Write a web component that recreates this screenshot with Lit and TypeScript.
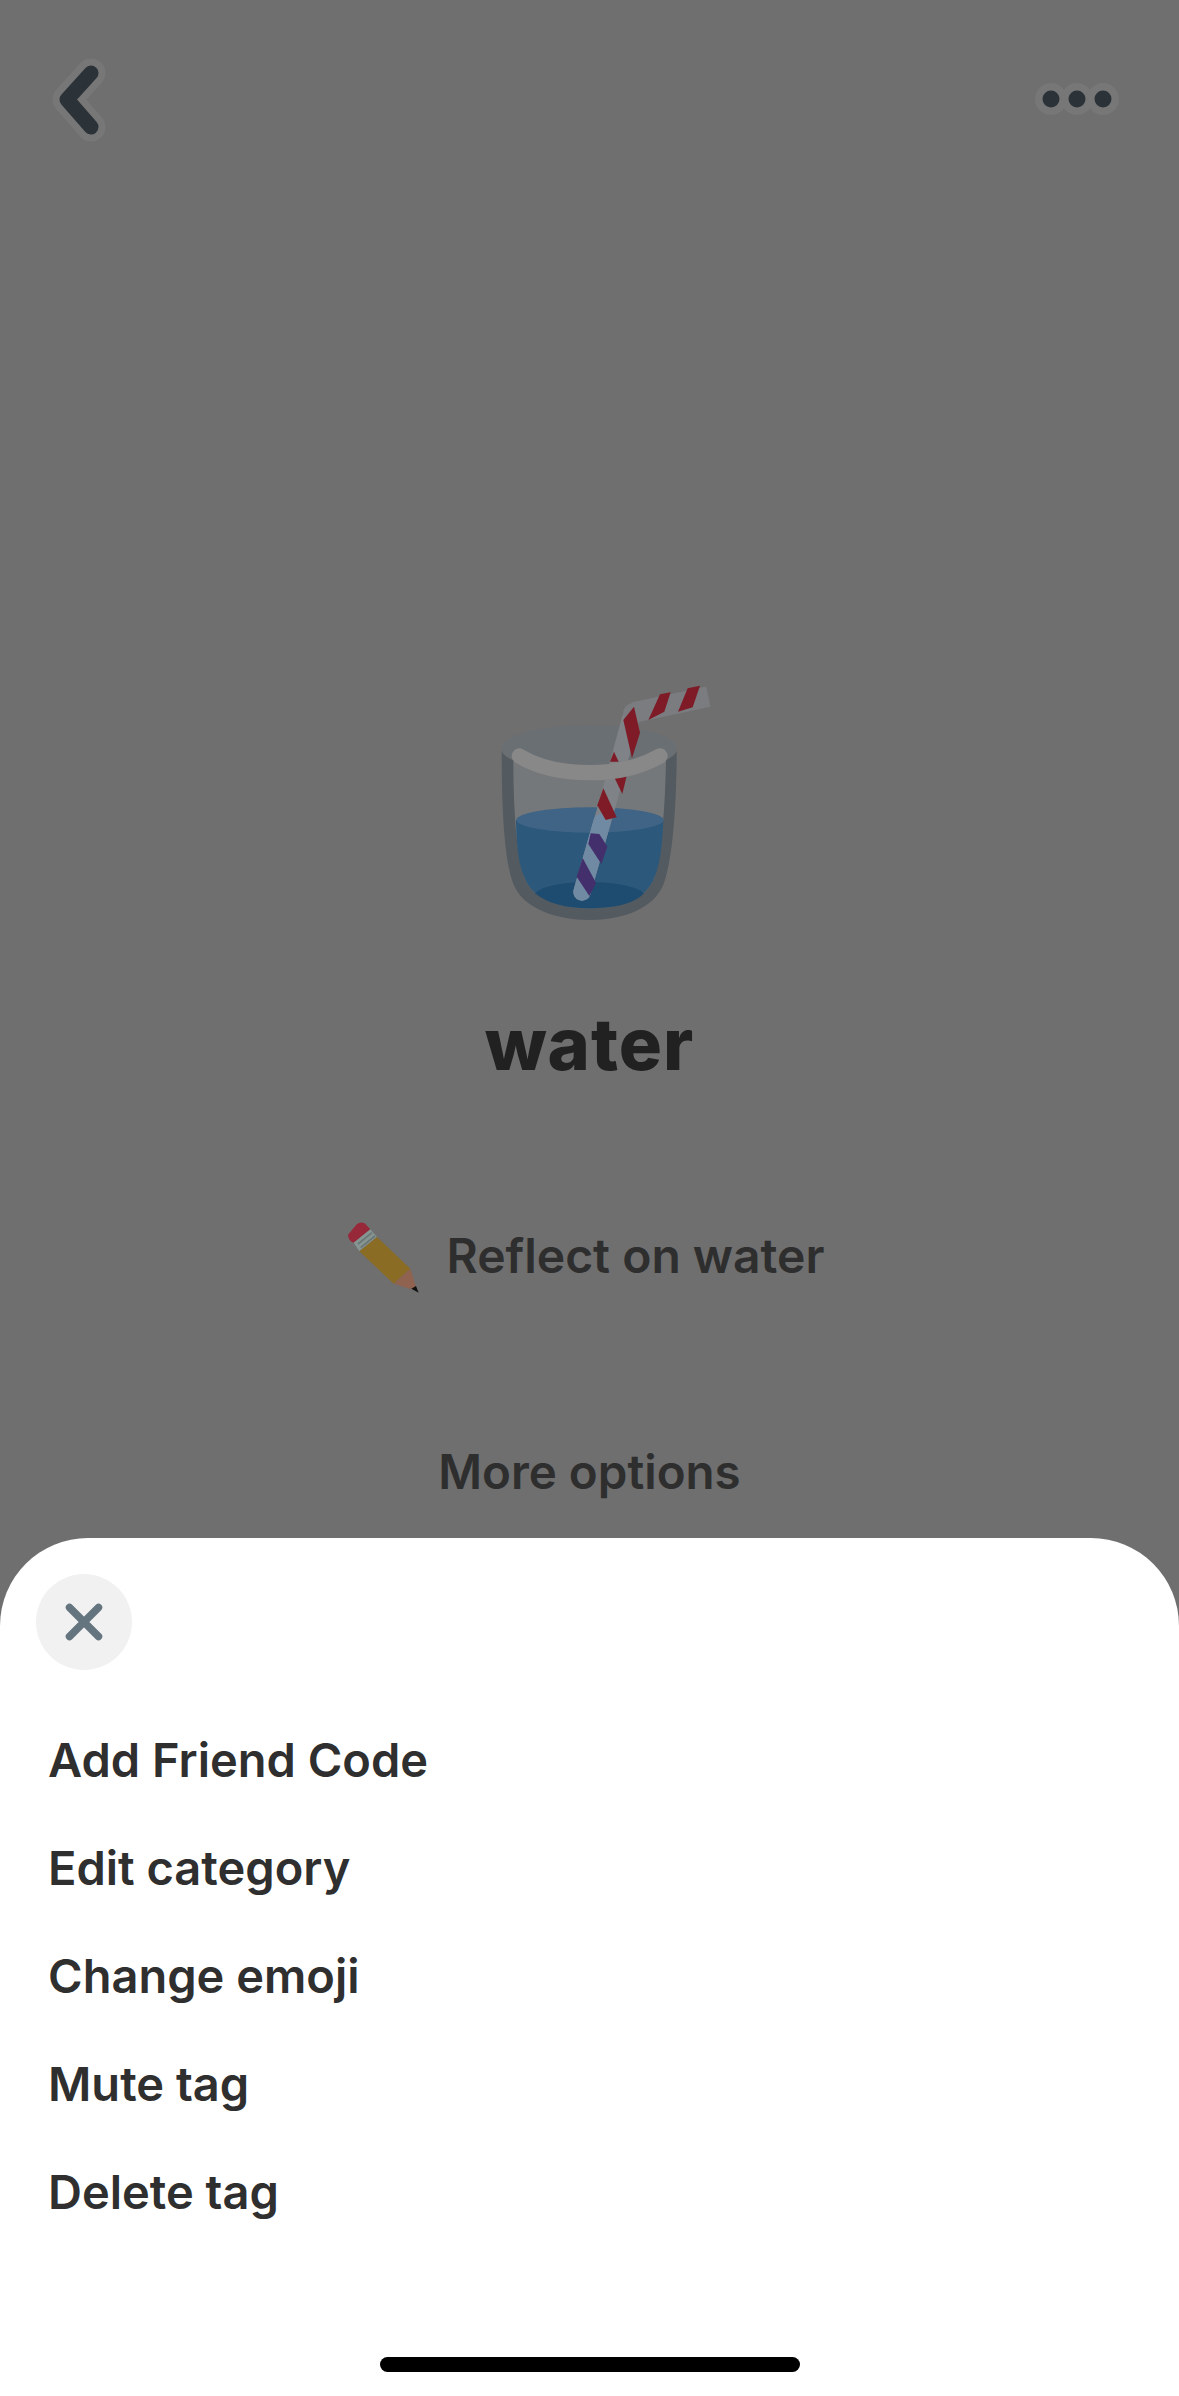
import { LitElement, html, css } from "lit";
import { customElement } from "lit/decorators.js";

const ITEMS = ["Add Friend Code", "Edit category", "Change emoji", "Mute tag", "Delete tag"];

@customElement("app-root")
export class AppRoot extends LitElement {
  static styles = css`
    :host { display: block; width: 1179px; height: 2396px; overflow: hidden; background: #6f6f6f;
      font-family: Inter, "Noto Sans", sans-serif; }
    .screen { display: flex; flex-direction: column; height: 2396px; }
    .dim { height: 1538px; flex: none; display: flex; flex-direction: column; align-items: center; }
    .top { width: 100%; box-sizing: border-box; padding: 54px 60px 0 46px; display: flex; justify-content: space-between; height: 686px; }
    .back { width: 66px; height: 92px; display: block; }
    .more { width: 88px; height: 46px; display: block; margin-top: 22px; }
    .glass { width: 280px; height: 280px; display: block; margin-left: 20px; flex: none; margin-top: -26px; }
    h1 { margin: 64px 0 0; font-size: 72px; line-height: 80px; font-weight: 800; color: #212121; letter-spacing: 1px; }
    .reflect { display: flex; align-items: center; gap: 27px; margin-top: 127px; margin-left: -7px; font-size: 48px; line-height: 90px; font-weight: 600; color: #2e2e2e; }
    .pencil { width: 72px; height: 72px; display: block; margin-top: 4px; }
    .options { margin-top: 143px; font-size: 47.5px; line-height: 56px; font-weight: 600; color: #2e2e2e; }
    .sheet { flex: 1; background: #fff; border-radius: 88px 88px 0 0; box-sizing: border-box; padding: 36px 36px 0; display: flex; flex-direction: column; }
    .close { width: 96px; height: 96px; border-radius: 50%; background: #f1f1f2; display: flex; align-items: center; justify-content: center; flex: none; }
    .close svg { width: 40px; height: 40px; display: block; }
    ul { list-style: none; margin: 36px 0 0; padding: 0 0 0 12px; }
    li { height: 108px; line-height: 108px; font-size: 47px; font-weight: 600; color: #2f2f2f; }
    .foot { margin-top: auto; padding-bottom: 24px; display: flex; justify-content: center; }
    .bar { width: 420px; height: 15px; border-radius: 8px; background: #000; }
  `;

  render() {
    return html`<div class="screen">
      <div class="dim">
        <div class="top">
          <svg class="back" viewBox="0 0 66 92">
            <path d="M45 19 L21 45.5 L45 73" fill="none" stroke="#777" stroke-width="29" stroke-linecap="round" stroke-linejoin="round"/>
            <path d="M45 19 L21 45.5 L45 73" fill="none" stroke="#2c3338" stroke-width="15" stroke-linecap="round" stroke-linejoin="round"/>
          </svg>
          <svg class="more" viewBox="0 0 88 46">
            <g fill="#777"><circle cx="20" cy="23" r="16"/><circle cx="46" cy="23" r="16"/><circle cx="72" cy="23" r="16"/></g>
            <g fill="#2c3338"><circle cx="20" cy="23" r="8.5"/><circle cx="46" cy="23" r="8.5"/><circle cx="72" cy="23" r="8.5"/></g>
          </svg>
        </div>
        <svg class="glass" viewBox="0 0 840 840">
          <ellipse cx="388" cy="265" rx="262" ry="70" fill="#6a6f73"/>
          <path d="M125 270 C125 420 130 590 159 669 C185 745 290 780 388 780 C490 780 585 745 612 669 C640 590 650 420 650 270 C650 300 540 340 388 340 C240 340 125 300 125 270Z" fill="#535a60"/>
          <path d="M160 300 C160 430 168 590 195 655 C215 715 300 745 388 745 C480 745 560 715 582 655 C605 590 616 430 618 300 C560 330 480 345 388 345 C290 345 210 330 160 300Z" fill="#75787a"/>
          <path d="M168 480 C170 570 178 620 195 655 C215 715 300 745 388 745 C480 745 560 715 582 655 C598 620 606 570 610 480Z" fill="#2b587b"/>
          <ellipse cx="390" cy="480" rx="221" ry="38" fill="#3f6485"/>
          <path d="M225 700 C270 655 500 655 552 700 C520 735 450 745 388 745 C320 745 260 730 225 700Z" fill="#1d4c70"/>
          <path d="M366 696 L440 440 L512 175" fill="none" stroke="#7f8286" stroke-width="52" stroke-linecap="round" stroke-linejoin="round"/>
          <path d="M520 158 L745 110" fill="none" stroke="#7a7c80" stroke-width="62"/>
          <circle cx="520" cy="160" r="31" fill="#7a7c80"/>
          <path d="M366 696 L426 486" fill="none" stroke="#708aa3" stroke-width="52" stroke-linecap="round"/>
          <g fill="#7e1b27">
            <path d="M522 140 L490 180 L516 295 L540 218Z"/>
            <path d="M565 180 L600 103 L632 97 L613 155Z"/>
            <path d="M654 155 L683 85 L720 77 L698 142Z"/>
            <path d="M462 275 L450 305 L476 305Z"/>
            <path d="M462 350 L500 348 L487 402Z"/>
            <path d="M430 385 L412 436 L437 480 L470 472Z"/>
          </g>
          <g fill="#432f6c">
            <path d="M392 520 L418 522 L442 560 L424 612 L385 552Z"/>
            <path d="M368 594 L350 650 L388 708 L408 668Z"/>
          </g>
          <path d="M178 288 C240 326 320 338 390 338 C470 338 540 322 600 288" fill="none" stroke="#888" stroke-width="46" stroke-linecap="round"/>
        </svg>
        <h1>water</h1>
        <div class="reflect">
          <svg class="pencil" viewBox="55 720 216 216">
            <path d="M58 758 L85 726 Q95 718 108 724 L125 742 L75 782 Q58 775 58 758Z" fill="#96283a"/>
            <path d="M75 782 L125 742 L145 765 L92 808Z" fill="#869492"/>
            <path d="M88 786 L130 752 M96 797 L139 762" stroke="#6a7675" stroke-width="5" fill="none"/>
            <path d="M92 808 L145 765 L245 860 L195 905Z" fill="#8a6c24"/>
            <path d="M195 905 L245 860 L262 915 L248 922Z" fill="#8f6350"/>
            <path d="M248 920 L262 912 L270 932Z" fill="#111"/>
          </svg>
          <span>Reflect on water</span>
        </div>
        <div class="options">More options</div>
      </div>
      <div class="sheet">
        <div class="close">
          <svg viewBox="0 0 40 40"><path d="M5.5 5.5 L34.5 34.5 M34.5 5.5 L5.5 34.5" stroke="#65757f" stroke-width="7.5" stroke-linecap="round"/></svg>
        </div>
        <ul>${ITEMS.map((t) => html`<li>${t}</li>`)}</ul>
        <div class="foot"><div class="bar"></div></div>
      </div>
    </div>`;
  }
}
